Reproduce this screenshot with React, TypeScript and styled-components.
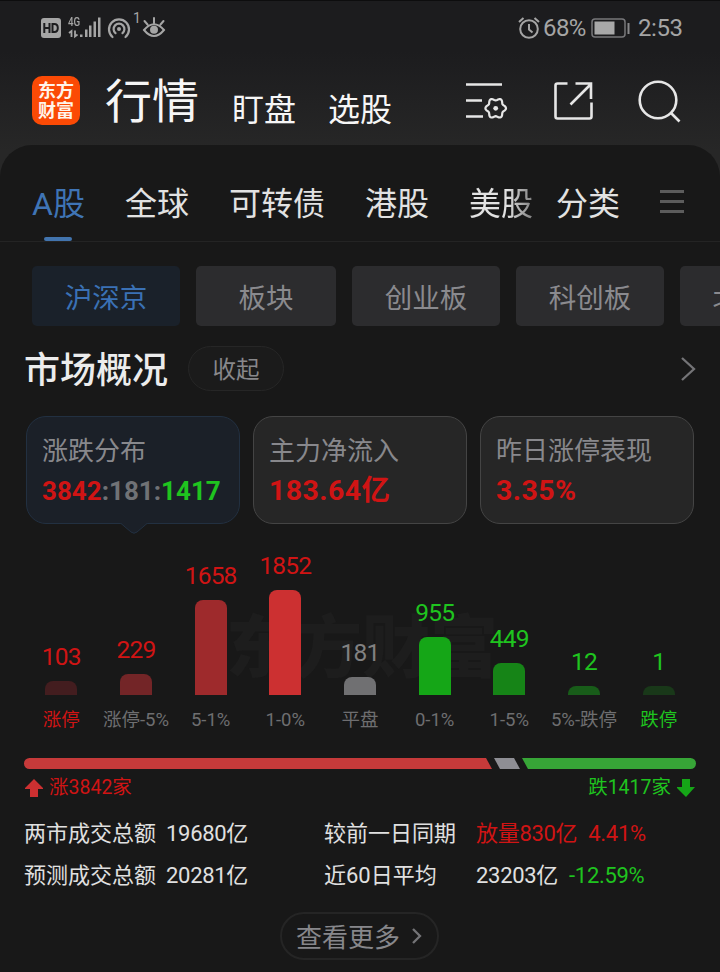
import React from "react";
import styled, { createGlobalStyle } from "styled-components";

const RED = "#d01414";
const GREEN = "#1fc41f";

const GlobalStyle = createGlobalStyle`
  * { box-sizing: border-box; }
  body {
    margin: 0;
    background: #181818;
    font-family: Roboto, "Noto Sans CJK SC", sans-serif;
    overflow: hidden;
  }
`;

const Screen = styled.div`
  width: 720px;
  height: 972px;
  overflow: hidden;
  display: flex;
  flex-direction: column;
  background: linear-gradient(#1c1c1e 0, #1c1c1e 50px, #272727 150px, #272727 200px);
  border-top: 1px solid #0d0d0e;
  white-space: nowrap;
`;

const StatusBar = styled.div`
  height: 54px;
  padding: 0 38px 0 41px;
  display: flex;
  justify-content: space-between;
  color: #a5a5a5;
  font-size: 24px;
  line-height: 54px;
`;

const StatusGroup = styled.div`
  display: flex;
  align-items: center;
`;

const BatteryText = styled.span`
  margin-left: 3px;
  width: 48px;
  letter-spacing: -0.6px;
`;

const Clock = styled.span`
  width: 44px;
  margin-left: 7px;
  letter-spacing: -0.4px;
`;

const Header = styled.header`
  height: 90px;
  flex: none;
  padding: 0 39px 0 32px;
  display: flex;
  align-items: center;
  color: #f6f6f6;
`;

const Logo = styled.div`
  width: 48px;
  height: 49px;
  border-radius: 10px;
  background: #fb4a05;
  color: #fff4ea;
  font-size: 18px;
  font-weight: 700;
  line-height: 20px;
  padding-top: 5px;
  text-align: center;
  white-space: normal;
`;

const HeaderTitle = styled.h1`
  margin: 0 0 0 25px;
  padding-top: 4px;
  font-size: 47px;
  line-height: 60px;
  font-weight: 400;
  width: 127px;
`;

const HeaderLink = styled.span`
  font-size: 32px;
  line-height: 40px;
  width: 96px;
  padding-top: 19px;
`;

const HeaderIcons = styled.div`
  margin-left: auto;
  padding-top: 2px;
  display: flex;
  gap: 44.5px;
  align-items: center;
`;

const Panel = styled.main`
  flex: 1;
  background: #181818;
  border-radius: 32px 32px 0 0;
  display: flex;
  flex-direction: column;
`;

const Tabs = styled.nav`
  height: 97px;
  flex: none;
  border-bottom: 1px solid #242424;
  padding-left: 32px;
  display: flex;
  align-items: stretch;
`;

const Tab = styled.div<{ $active?: boolean; $fade?: boolean; $gap?: number }>`
  margin-right: ${(p) => p.$gap ?? 40}px;
  font-size: 32px;
  line-height: 118px;
  color: ${(p) => (p.$active ? "#3f74b5" : "#e2e2e2")};
  position: relative;
  ${(p) => p.$fade && "mask-image: linear-gradient(90deg, #000 60%, rgba(0,0,0,.5));"}
`;

const TabMark = styled.i`
  position: absolute;
  left: 12px;
  bottom: 0;
  width: 28px;
  height: 4px;
  border-radius: 2px;
  background: #4274ae;
`;

const MenuIcon = styled.div`
  display: flex;
  flex-direction: column;
  gap: 7px;
  padding-top: 45px;
  margin-left: 19px;
`;

const MenuLine = styled.i`
  width: 24px;
  height: 3px;
  background: #5c5c5c;
`;

const Chips = styled.div`
  display: flex;
  gap: 16px;
  padding: 24px 0 0 32px;
  overflow: hidden;
  flex: none;
`;

const Chip = styled.div<{ $active?: boolean; $width?: number }>`
  flex: none;
  width: ${(p) => p.$width ?? 148}px;
  height: 60px;
  border-radius: 5px;
  text-align: center;
  font-size: 27.5px;
  line-height: 66px;
  background: ${(p) => (p.$active ? "#1a212a" : "#2c2c2e")};
  color: ${(p) => (p.$active ? "#3a71b5" : "#8a8a8e")};
`;

const SectionHead = styled.div`
  display: flex;
  align-items: center;
  height: 45px;
  margin: 20px 24px 0;
`;

const SectionTitle = styled.h2`
  margin: 0 20px 0 0;
  padding-top: 5px;
  font-size: 36px;
  line-height: 52px;
  font-weight: 500;
  color: #ececec;
`;

const CollapsePill = styled.div`
  width: 96px;
  height: 45px;
  border: 1px solid #262626;
  border-radius: 23px;
  background: #1b1b1b;
  color: #88888b;
  font-size: 23.5px;
  line-height: 47px;
  text-align: center;
  margin-right: auto;
`;

const Cards = styled.div`
  display: flex;
  gap: 13px;
  margin: 25px 26px 0;
`;

const Card = styled.div<{ $active?: boolean }>`
  position: relative;
  width: 214px;
  height: 108px;
  border-radius: 20px;
  border: 1px solid ${(p) => (p.$active ? "#223041" : "#444")};
  background: ${(p) => (p.$active ? "#1b2028" : "#262626")};
  padding: 16px 0 0 15px;
`;

const CardLabel = styled.div`
  font-size: 26px;
  line-height: 37px;
  color: #88888c;
`;

const CardValue = styled.div<{ $small?: boolean }>`
  font-size: ${(p) => (p.$small ? 26 : 28.5)}px;
  letter-spacing: ${(p) => (p.$small ? 0 : 0.4)}px;
  line-height: 42px;
  font-weight: 700;
  color: ${RED};
`;

const Tone = styled.span<{ $color: string }>`
  color: ${(p) => p.$color};
`;

const Pointer = styled.svg`
  position: absolute;
  left: 92px;
  top: 105px;
`;

const Chart = styled.div`
  position: relative;
  margin: 0 24px;
  height: 213px;
  display: grid;
  grid-template-columns: repeat(9, 1fr);
`;

const Watermark = styled.div`
  position: absolute;
  left: 202px;
  top: 75px;
  font-size: 68px;
  line-height: 100px;
  font-weight: 900;
  color: #1d1d1d;
`;

const Column = styled.div<{ $color: string }>`
  position: relative;
  display: flex;
  flex-direction: column;
  justify-content: flex-end;
  align-items: center;
  color: ${(p) => p.$color};
`;

const Count = styled.div`
  font-size: 24.5px;
  line-height: 30px;
  letter-spacing: -0.8px;
`;

const Bar = styled.div<{ $height: number; $color: string }>`
  width: 32px;
  height: ${(p) => p.$height}px;
  margin-top: 9px;
  border-radius: 8px 8px 0 0;
  background: ${(p) => p.$color};
`;

const RangeLabel = styled.div<{ $color: string }>`
  font-size: 18.5px;
  line-height: 30px;
  margin-top: 10px;
  height: 32.5px;
  color: ${(p) => p.$color};
`;

const Ratio = styled.div`
  display: flex;
  gap: 2px;
  height: 11px;
  margin: 21px 24px 0;
`;

const RatioPart = styled.div<{ $width: number; $color: string; $shape: "start" | "mid" | "end" }>`
  width: ${(p) => p.$width}px;
  background: ${(p) => p.$color};
  border-radius: ${(p) => (p.$shape === "start" ? "6px 0 0 6px" : p.$shape === "end" ? "0 6px 6px 0" : "0")};
  clip-path: ${(p) =>
    p.$shape === "start"
      ? "polygon(0 0, calc(100% - 6px) 0, 100% 100%, 0 100%)"
      : p.$shape === "mid"
        ? "polygon(0 0, calc(100% - 6px) 0, 100% 100%, 6px 100%)"
        : "polygon(0 0, 100% 0, 100% 100%, 6px 100%)"};
`;

const RatioLegend = styled.div`
  display: flex;
  justify-content: space-between;
  margin: 4px 25px 0;
  font-size: 19.5px;
  line-height: 30px;
`;

const LegendItem = styled.div<{ $color: string }>`
  display: flex;
  align-items: center;
  gap: 6px;
  color: ${(p) => p.$color};
`;

const Stats = styled.div`
  display: grid;
  grid-template-columns: 142px 158px 152px 1fr;
  grid-auto-rows: 42px;
  margin: 9px 24px 0;
  font-size: 22px;
  line-height: 43px;
  color: #e0e0e0;
`;

const StatValue = styled.div<{ $color?: string }>`
  display: flex;
  gap: 11px;
  letter-spacing: -0.3px;
  color: ${(p) => p.$color ?? "inherit"};
`;

const More = styled.div`
  display: flex;
  align-items: center;
  gap: 12px;
  width: 159px;
  height: 48px;
  margin: 16px 0 0 280px;
  padding-left: 14px;
  border: 2px solid #252525;
  border-radius: 24px;
  font-size: 26px;
  line-height: 44px;
  color: #87878b;
`;

const MoreText = styled.span`
  padding-top: 4px;
`;

const HdIcon = () => (
  <svg width="20" height="20" viewBox="0 0 20 20">
    <rect width="20" height="20" rx="3" fill="#a5a5a5" />
    <path d="M3.3 5v10M8.5 5v10M3.3 10h5.2M11.5 6v8h1.8q3.5 0 3.5-4t-3.500-4z" fill="none" stroke="#1c1c1e" strokeWidth="2" />
  </svg>
);

const SignalText = styled.span`
  font-size: 12.5px;
  line-height: 12px;
  font-weight: 500;
  width: 13px;
  height: 25px;
  margin-left: 7px;
  transform: scaleX(0.78);
  transform-origin: left;
`;

const SignalIcon = () => (
  <svg width="34" height="24" viewBox="0 0 34 24">
    <g fill="#a5a5a5">
      <rect x="12" y="18.500" width="2.500" height="2.500" />
      <rect x="17" y="13.500" width="2.500" height="7.500" />
      <rect x="21" y="9.500" width="2.500" height="11.500" />
      <rect x="25.500" y="5.500" width="2.500" height="15.500" />
      <rect x="30" y="1.500" width="2.500" height="19.500" />
    </g>
    <path d="M3.500 21v-6l-2.500 2M7 14.500v6l2.500-2" fill="none" stroke="#a5a5a5" strokeWidth="1.800" />
  </svg>
);

const SignalBox = styled.div`
  display: flex;
  align-items: center;
  height: 24px;
  margin-right: 5px;
  svg { margin-left: -13px; }
`;

const HotspotIcon = () => (
  <svg width="24" height="24" viewBox="0 0 24 24" fill="none" stroke="#a5a5a5" strokeWidth="2.200" strokeLinecap="round">
    <circle cx="12" cy="13" r="2" fill="#a5a5a5" stroke="none" />
    <path d="M8.500 17.200a5.400 5.400 0 1 1 7 0M5.500 21a10 10 0 1 1 13 0" />
  </svg>
);

const HotspotCount = styled.span`
  font-size: 14px;
  line-height: 14px;
  height: 35px;
  width: 9px;
  margin-left: 2px;
`;

const EyeIcon = () => (
  <svg width="24" height="24" viewBox="0 0 24 24" fill="none" stroke="#a5a5a5" strokeWidth="2" strokeLinecap="round">
    <path d="M2 14q10-11.500 20 0q-10 12-20 0zM12 2v5M2.500 5l3 3.500M21.500 5l-3 3.500" />
    <circle cx="12" cy="13.800" r="4" fill="#a5a5a5" stroke="none" />
  </svg>
);

const AlarmIcon = () => (
  <svg width="22" height="22" viewBox="0 0 22 22" fill="none" stroke="#a5a5a5" strokeWidth="2">
    <circle cx="11" cy="12" r="8.800" />
    <path d="M11 7v5.500l3.500 3M1 5l4.500-4M21 5l-4.500-4" />
  </svg>
);

const BatteryIcon = () => (
  <svg width="40" height="20" viewBox="0 0 40 20">
    <rect x="1" y="1" width="33" height="18" rx="3" fill="none" stroke="#77777a" strokeWidth="1.500" />
    <rect x="3.500" y="3.500" width="20" height="13" fill="#a8a8a8" />
    <rect x="36.500" y="5" width="2" height="11" fill="#88888a" />
  </svg>
);

// Six-lobed outline: the radius swells once every 60 degrees.
const gearPath =
  Array.from({ length: 72 }, (_, i) => {
    const a = (i * Math.PI) / 36;
    const r = 9.1 + 1.2 * Math.cos(6 * a);
    return `${i ? "L" : "M"}${(30.7 + r * Math.cos(a)).toFixed(2)} ${(28.3 + r * Math.sin(a)).toFixed(2)}`;
  }).join("") + "z";

const ListGearIcon = () => (
  <svg width="43" height="42" viewBox="0 0 43 42" fill="none" stroke="#e6e6e6" strokeWidth="2.400">
    <path d="M1 4.500h36M1 20.500h16M1 36.500h17" />
    <path d={gearPath} strokeLinejoin="round" strokeWidth="2.200" />
    <circle cx="30.700" cy="28.300" r="2.400" fill="#e6e6e6" stroke="none" />
  </svg>
);

const ShareIcon = () => (
  <svg width="40" height="42" viewBox="0 0 40 42" fill="none" stroke="#e6e6e6" strokeWidth="2.600">
    <path d="M14.500 3.500h-10q-2 0-2 2v31q0 2 2 2h32q2 0 2-2v-14M22.500 3.500h15.500v15.500M38 4L17.500 24.500" />
  </svg>
);

const SearchIcon = () => (
  <svg width="44" height="44" viewBox="0 0 44 44" fill="none" stroke="#e6e6e6" strokeWidth="2.600">
    <circle cx="21" cy="21" r="18.300" />
    <path d="M33.500 33.500l9 9" />
  </svg>
);

const Chevron = ({ width, height, color = "#747477" }: { width: number; height: number; color?: string }) => (
  <svg width={width} height={height} viewBox={`0 0 ${width} ${height}`} fill="none" stroke={color} strokeWidth="2.300">
    <path d={`M1 1L${width - 2} ${height / 2}L1 ${height - 1}`} />
  </svg>
);

const Arrow = ({ down, color }: { down?: boolean; color: string }) => (
  <svg width="18" height="18" viewBox="0 0 18 18" fill={color}>
    <path d={down ? "M5 0h8v8h5L9 18L0 9V8h5z" : "M5 18h8v-8h5V9L9 0L0 9v1h5z"} />
  </svg>
);

const columns = [
  { count: 103, height: 14, bar: "#431d1f", label: "涨停", tone: RED, labelTone: RED },
  { count: 229, height: 20.5, bar: "#732527", label: "涨停-5%", tone: RED },
  { count: 1658, height: 95, bar: "#9e2a2c", label: "5-1%", tone: RED },
  { count: 1852, height: 105, bar: "#cc3031", label: "1-0%", tone: RED },
  { count: 181, height: 18, bar: "#707072", label: "平盘", tone: "#818181" },
  { count: 955, height: 58, bar: "#15a617", label: "0-1%", tone: GREEN },
  { count: 449, height: 32, bar: "#168417", label: "1-5%", tone: GREEN },
  { count: 12, height: 9, bar: "#185c19", label: "5%-跌停", tone: GREEN },
  { count: 1, height: 9, bar: "#193819", label: "跌停", tone: GREEN, labelTone: GREEN },
];

export default function App() {
  return (
    <Screen>
      <GlobalStyle />
      <StatusBar>
        <StatusGroup>
          <HdIcon />
          <SignalBox>
            <SignalText>4G</SignalText>
            <SignalIcon />
          </SignalBox>
          <HotspotIcon />
          <HotspotCount>1</HotspotCount>
          <EyeIcon />
        </StatusGroup>
        <StatusGroup>
          <AlarmIcon />
          <BatteryText>68%</BatteryText>
          <BatteryIcon />
          <Clock>2:53</Clock>
        </StatusGroup>
      </StatusBar>

      <Header>
        <Logo>东方<br />财富</Logo>
        <HeaderTitle>行情</HeaderTitle>
        <HeaderLink>盯盘</HeaderLink>
        <HeaderLink>选股</HeaderLink>
        <HeaderIcons>
          <ListGearIcon />
          <ShareIcon />
          <SearchIcon />
        </HeaderIcons>
      </Header>

      <Panel>
        <Tabs>
          <Tab $active>A股<TabMark /></Tab>
          <Tab>全球</Tab>
          <Tab>可转债</Tab>
          <Tab>港股</Tab>
          <Tab $fade $gap={23}>美股</Tab>
          <Tab $gap={21}>分类</Tab>
          <MenuIcon>
            <MenuLine />
            <MenuLine />
            <MenuLine />
          </MenuIcon>
        </Tabs>

        <Chips>
          <Chip $active>沪深京</Chip>
          <Chip $width={140}>板块</Chip>
          <Chip>创业板</Chip>
          <Chip>科创板</Chip>
          <Chip $width={120}>北证</Chip>
        </Chips>

        <SectionHead>
          <SectionTitle>市场概况</SectionTitle>
          <CollapsePill>收起</CollapsePill>
          <Chevron width={15} height={24} />
        </SectionHead>

        <Cards>
          <Card $active>
            <CardLabel>涨跌分布</CardLabel>
            <CardValue $small>
              3842<Tone $color="#707276">:181:</Tone><Tone $color={GREEN}>1417</Tone>
            </CardValue>
            <Pointer width="30" height="14" viewBox="0 0 30 14">
              <path d="M0 0L2 1.500L12 10Q15 12.500 18 10L28 1.500L30 0z" fill="#1b2028" />
              <path d="M2 1.500L12 10Q15 12.500 18 10L28 1.500" fill="none" stroke="#223041" />
            </Pointer>
          </Card>
          <Card>
            <CardLabel>主力净流入</CardLabel>
            <CardValue>183.64亿</CardValue>
          </Card>
          <Card>
            <CardLabel>昨日涨停表现</CardLabel>
            <CardValue>3.35%</CardValue>
          </Card>
        </Cards>

        <Chart>
          <Watermark>东方财富</Watermark>
          {columns.map((c) => (
            <Column key={c.label} $color={c.tone}>
              <Count>{c.count}</Count>
              <Bar $height={c.height} $color={c.bar} />
              <RangeLabel $color={c.labelTone ?? "#6e6e70"}>{c.label}</RangeLabel>
            </Column>
          ))}
        </Chart>

        <Ratio>
          <RatioPart $width={468} $color="#c63a3a" $shape="start" />
          <RatioPart $width={26} $color="#8e8e94" $shape="mid" />
          <RatioPart $width={174} $color="#37a537" $shape="end" />
        </Ratio>
        <RatioLegend>
          <LegendItem $color={RED}>
            <Arrow color="#cc3031" />
            涨3842家
          </LegendItem>
          <LegendItem $color={GREEN}>
            跌1417家
            <Arrow down color="#15a617" />
          </LegendItem>
        </RatioLegend>

        <Stats>
          <span>两市成交总额</span>
          <StatValue>19680亿</StatValue>
          <span>较前一日同期</span>
          <StatValue $color={RED}>
            <span>放量830亿</span>
            <span>4.41%</span>
          </StatValue>
          <span>预测成交总额</span>
          <StatValue>20281亿</StatValue>
          <span>近60日平均</span>
          <StatValue>
            <span>23203亿</span>
            <Tone $color={GREEN}>-12.59%</Tone>
          </StatValue>
        </Stats>

        <More>
          <MoreText>查看更多</MoreText>
          <Chevron width={10} height={16} />
        </More>
      </Panel>
    </Screen>
  );
}
